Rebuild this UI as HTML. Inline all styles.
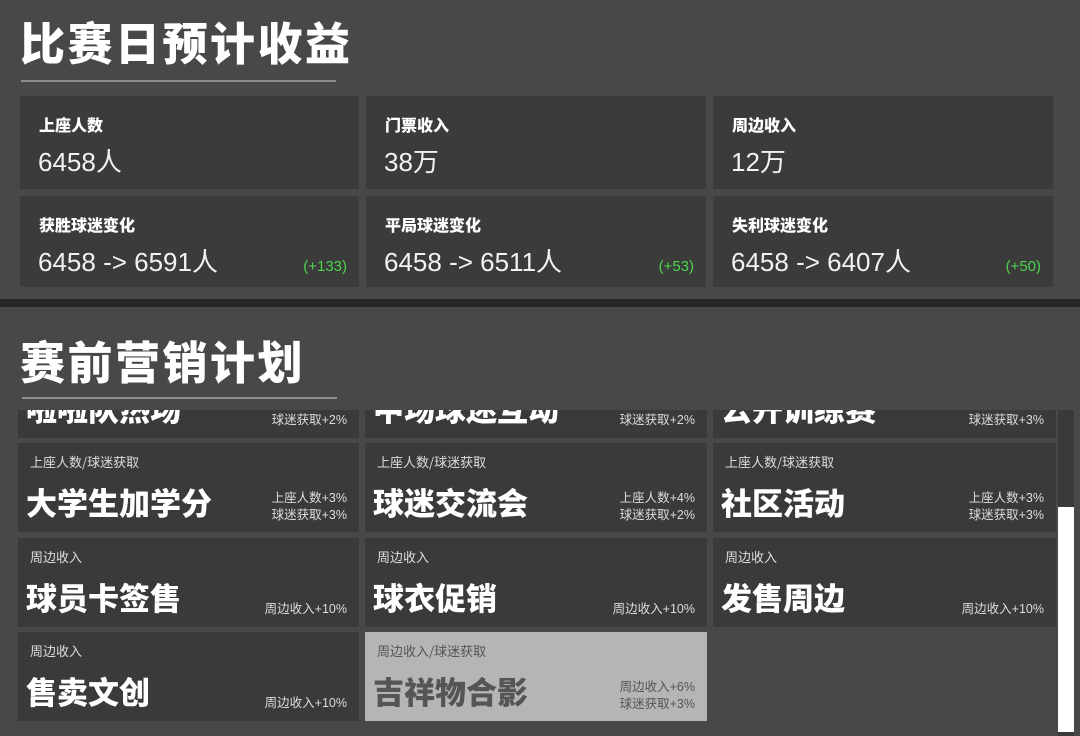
<!DOCTYPE html>
<html><head><meta charset="utf-8"><style>
*{margin:0;padding:0;box-sizing:border-box}
body{width:1080px;height:736px;background:#484848;overflow:hidden;position:relative;font-family:"Liberation Sans","Noto Sans CJK SC",sans-serif;color:#eee}
.h{position:absolute;font-family:"Noto Sans CJK SC",sans-serif;font-weight:900;font-size:45px;color:#fff;letter-spacing:2.5px;line-height:1}
.ul{position:absolute;height:2px;background:#8c8c8c}
.c{position:absolute;background:#3b3b3b}
.c .l{position:absolute;left:19px;top:20px;font-family:"Noto Sans CJK SC",sans-serif;font-weight:900;font-size:16px;color:#fff;line-height:1}
.c .v{position:absolute;left:18px;top:53px;font-size:26px;color:#f2f2f2;line-height:1;font-family:"Liberation Sans","Noto Sans CJK SC",sans-serif}
.c .g{position:absolute;right:12px;top:62px;font-size:15px;color:#4cd44c}
.sep{position:absolute;left:0;top:299px;width:1080px;height:8px;background:#262626}
.sc{position:absolute;left:0;top:410px;width:1080px;height:326px;overflow:hidden}
.k{position:absolute;background:#3a3a3a;height:89px}
.k .t{position:absolute;left:12px;top:9px;font-size:13px;color:#ddd;font-family:"Noto Sans CJK SC",sans-serif}
.k .n{position:absolute;left:8px;top:40px;font-size:31px;font-weight:900;color:#fff;font-family:"Noto Sans CJK SC",sans-serif;line-height:1.2}
.k .r{position:absolute;right:12px;bottom:8px;font-size:12.5px;color:#ddd;text-align:right;line-height:17px;font-family:"Liberation Sans","Noto Sans CJK SC",sans-serif}
.k .r.s{bottom:9px}
.k.hl{background:#b5b5b5}
.k.hl .t,.k.hl .r{color:#555}.k.hl .n{color:#555}
</style></head><body>
<div class="h" style="left:20px;top:18px">比赛日预计收益</div>
<div class="ul" style="left:21px;top:80px;width:315px"></div>
<div class="c" style="left:20px;top:96px;width:339px;height:93px"><div class="l">上座人数</div><div class="v">6458人</div></div>
<div class="c" style="left:366px;top:96px;width:340px;height:93px"><div class="l">门票收入</div><div class="v">38万</div></div>
<div class="c" style="left:713px;top:96px;width:340px;height:93px"><div class="l">周边收入</div><div class="v">12万</div></div>
<div class="c" style="left:20px;top:196px;width:339px;height:91px"><div class="l">获胜球迷变化</div><div class="v">6458 -&gt; 6591人</div><div class="g">(+133)</div></div>
<div class="c" style="left:366px;top:196px;width:340px;height:91px"><div class="l">平局球迷变化</div><div class="v">6458 -&gt; 6511人</div><div class="g">(+53)</div></div>
<div class="c" style="left:713px;top:196px;width:340px;height:91px"><div class="l">失利球迷变化</div><div class="v">6458 -&gt; 6407人</div><div class="g">(+50)</div></div>
<div class="sep"></div>
<div class="h" style="left:20px;top:337px">赛前营销计划</div>
<div class="ul" style="left:22px;top:397px;width:315px"></div>
<div class="sc">
<div class="k" style="left:18px;top:-61px;width:341px"><div class="t">上座人数/球迷获取</div><div class="n">啦啦队热场</div><div class="r s">球迷获取+2%</div></div>
<div class="k" style="left:365px;top:-61px;width:342px"><div class="t">上座人数/球迷获取</div><div class="n">中场球迷互动</div><div class="r s">球迷获取+2%</div></div>
<div class="k" style="left:713px;top:-61px;width:343px"><div class="t">上座人数/球迷获取</div><div class="n">公开训练赛</div><div class="r s">球迷获取+3%</div></div>
<div class="k" style="left:18px;top:33px;width:341px"><div class="t">上座人数/球迷获取</div><div class="n">大学生加学分</div><div class="r">上座人数+3%<br>球迷获取+3%</div></div>
<div class="k" style="left:365px;top:33px;width:342px"><div class="t">上座人数/球迷获取</div><div class="n">球迷交流会</div><div class="r">上座人数+4%<br>球迷获取+2%</div></div>
<div class="k" style="left:713px;top:33px;width:343px"><div class="t">上座人数/球迷获取</div><div class="n">社区活动</div><div class="r">上座人数+3%<br>球迷获取+3%</div></div>
<div class="k" style="left:18px;top:128px;width:341px"><div class="t">周边收入</div><div class="n">球员卡签售</div><div class="r s">周边收入+10%</div></div>
<div class="k" style="left:365px;top:128px;width:342px"><div class="t">周边收入</div><div class="n">球衣促销</div><div class="r s">周边收入+10%</div></div>
<div class="k" style="left:713px;top:128px;width:343px"><div class="t">周边收入</div><div class="n">发售周边</div><div class="r s">周边收入+10%</div></div>
<div class="k" style="left:18px;top:222px;width:341px"><div class="t">周边收入</div><div class="n">售卖文创</div><div class="r s">周边收入+10%</div></div>
<div class="k hl" style="left:365px;top:222px;width:342px"><div class="t">周边收入/球迷获取</div><div class="n">吉祥物合影</div><div class="r">周边收入+6%<br>球迷获取+3%</div></div>
<div style="position:absolute;left:1058px;top:0;width:16px;height:326px;background:#3a3a3a"></div>
<div style="position:absolute;left:1058px;top:97px;width:16px;height:225px;background:#fff"></div>
</div>
</body></html>
